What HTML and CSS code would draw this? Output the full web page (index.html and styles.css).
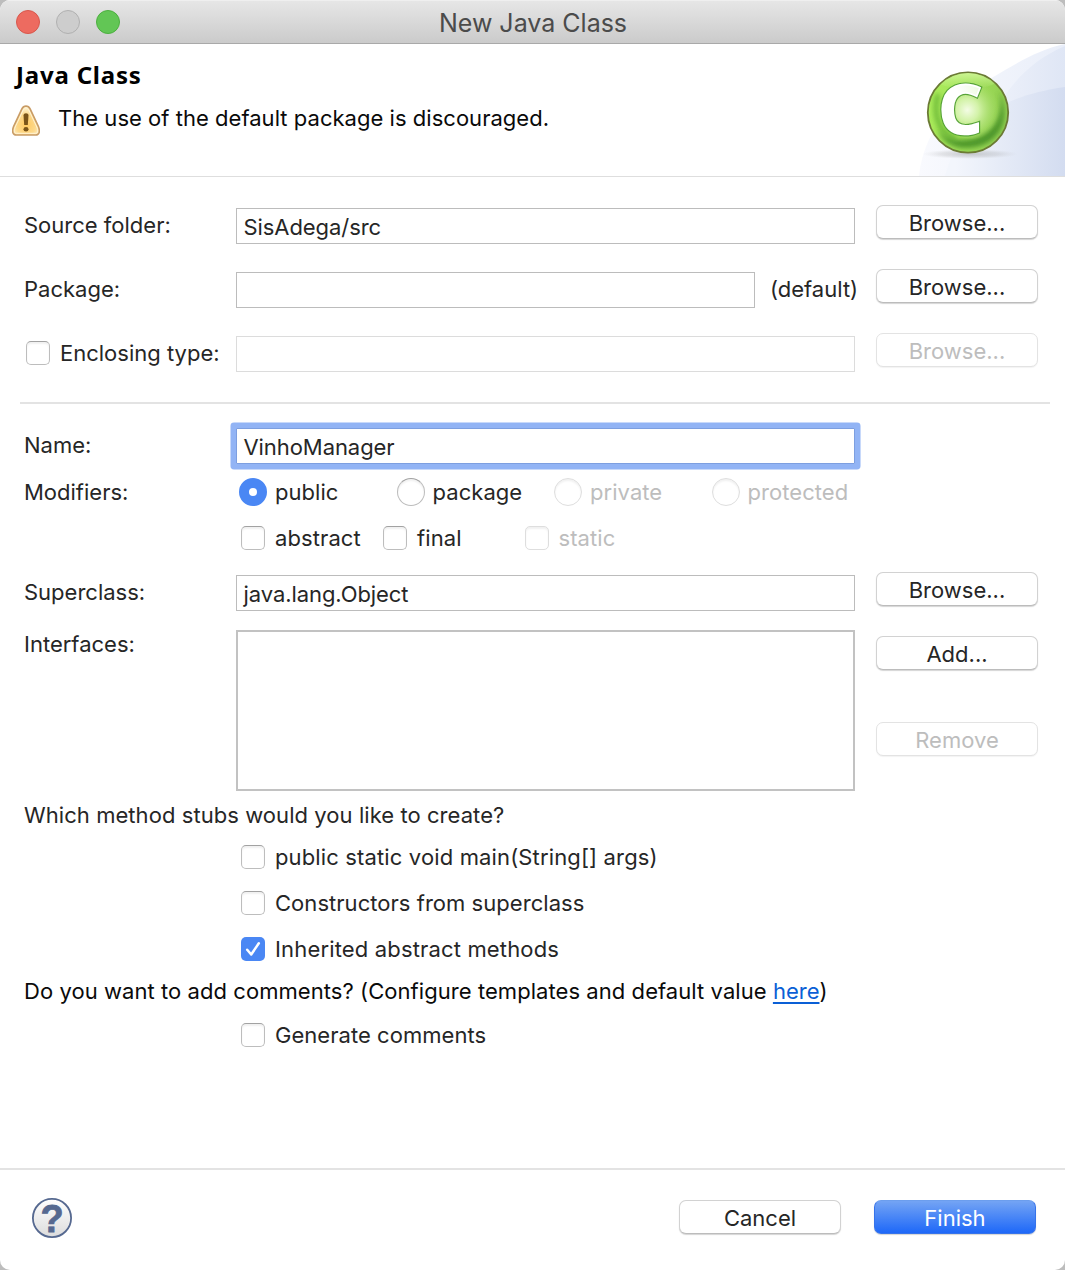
FILE: index.html
```html
<!DOCTYPE html>
<html lang="en">
<head>
<meta charset="utf-8">
<title>New Java Class</title>
<link rel="stylesheet" href="styles.css">
</head>
<body>
<div class="window">
  <header class="titlebar">
    <div class="lights"><span class="light red"></span><span class="light grey"></span><span class="light green"></span></div>
    <div class="title">New Java Class</div>
  </header>

  <section class="banner">
    <div class="banner-text">
      <h1>Java Class</h1>
      <div class="message">
        <svg class="warn" width="28" height="31" viewBox="0 0 28 31">
          <defs><radialGradient id="wg" cx=".5" cy=".65" r=".6"><stop offset="0" stop-color="#ffc95f"/><stop offset=".6" stop-color="#fdd98c"/><stop offset="1" stop-color="#fff3cf"/></radialGradient></defs>
          <path d="M14 1.200c1.900 0 3.200 1 4.100 2.700l8.300 17.600c.9 2.200 1.200 4 .7 6-.5 1.700-1.700 2.500-3.400 2.500H4.300c-1.700 0-2.900-.8-3.400-2.500-.5-2-.2-3.800.7-6L9.900 3.900C10.800 2.200 12.100 1.200 14 1.200z" fill="url(#wg)" stroke="#c99c66" stroke-width="1.700"/>
          <path d="M14 2.900c1.200 0 2 .7 2.600 1.800L24.800 22c.8 1.900 1 3.300.7 4.800-.3 1.100-.9 1.500-2 1.500h-19c-1.100 0-1.700-.4-2-1.500-.3-1.500-.1-2.900.7-4.800l8.200-17.300c.6-1.100 1.400-1.800 2.600-1.800z" fill="none" stroke="#fff4d6" stroke-width="1"/>
          <path d="M11.500 10.500c0-3 5-3 5 0L15.800 20h-3.600z" fill="#7a5418"/><ellipse cx="14" cy="24.200" rx="2.500" ry="2.200" fill="#7a5418"/>
        </svg>
        <span>The use of the default package is discouraged.</span>
      </div>
    </div>
    <svg class="banner-art" width="200" height="132" viewBox="0 0 200 132">
      <defs>
        <linearGradient id="a" x1="54" x2="200" y1="0" y2="0" gradientUnits="userSpaceOnUse"><stop offset="0" stop-color="#f9fafe"/><stop offset="1" stop-color="#e9eef9"/></linearGradient>
        <linearGradient id="b" x1="90" x2="200" y1="0" y2="0" gradientUnits="userSpaceOnUse"><stop offset="0" stop-color="#f5f7fd"/><stop offset="1" stop-color="#dfe6f5"/></linearGradient>
        <linearGradient id="c" x1="90" x2="200" y1="0" y2="0" gradientUnits="userSpaceOnUse"><stop offset="0" stop-color="#f3f6fc"/><stop offset="1" stop-color="#d3dcf0"/></linearGradient>
        <linearGradient id="ball" x1="0" x2="1" y1="0" y2=".15"><stop offset="0" stop-color="#aef05c"/><stop offset=".5" stop-color="#9fdf57"/><stop offset="1" stop-color="#93d052"/></linearGradient>
        <radialGradient id="glow" cx=".42" cy=".5" r=".55"><stop offset="0" stop-color="#f4fce6"/><stop offset=".35" stop-color="#d9f5b2" stop-opacity=".9"/><stop offset="1" stop-color="#a9dc6c" stop-opacity="0"/></radialGradient>
        <linearGradient id="top" x1="0" x2="0" y1="0" y2="1"><stop offset="0" stop-color="#d3f89c"/><stop offset="1" stop-color="#c9f590" stop-opacity="0"/></linearGradient>
        <linearGradient id="letter" x1="0" x2="1" y1="1" y2="0"><stop offset="0" stop-color="#fff"/><stop offset=".55" stop-color="#fff"/><stop offset="1" stop-color="#e3f8cf"/></linearGradient>
        <filter id="soft" x="-30%" y="-30%" width="160%" height="160%"><feGaussianBlur stdDeviation="2.500"/></filter>
        <radialGradient id="shade"><stop offset="0" stop-color="#888" stop-opacity=".4"/><stop offset=".6" stop-color="#999" stop-opacity=".22"/><stop offset="1" stop-color="#bbb" stop-opacity="0"/></radialGradient>
        <clipPath id="disc"><circle cx="103" cy="68.500" r="39.500"/></clipPath>
      </defs>
      <path d="M54 132C60 80 95 50 130 32 152 19 175 5 200 0v132z" fill="url(#a)"/>
      <path d="M95 132C125 85 135 30 200 2v130z" fill="url(#b)"/>
      <path d="M80 132C90 95 115 55 200 43v89z" fill="url(#c)"/>
      <ellipse cx="105" cy="110" rx="48" ry="5" fill="url(#shade)"/>
      <circle cx="103" cy="68.500" r="40.200" fill="url(#ball)" stroke="#6b7a35" stroke-width="1.800"/>
      <g clip-path="url(#disc)">
        <path d="M134 46C142 75 124 98 92 96 82 95 76 90 72 84c4 12 14 20 28 20 34 0 48-28 34-58z" fill="#458f26" opacity=".9" filter="url(#soft)"/>
        <ellipse cx="102" cy="36" rx="30" ry="9" fill="url(#top)"/>
        <circle cx="107" cy="66" r="29" fill="url(#glow)"/>
        <path d="M73 50c-5 18-1 38 18 45" fill="none" stroke="#57a62c" stroke-width="5" opacity=".7" filter="url(#soft)"/>
      </g>
      <g class="badge" transform="translate(73.300 89.800) scale(1.020 1)">
        <text stroke="#57a338" stroke-width="4">C</text>
        <text fill="url(#letter)" stroke="#fff" stroke-width="1.700">C</text>
      </g>
    </svg>
  </section>

  <main class="form">
    <div class="row"><label>Source folder:</label><div class="field">SisAdega/src</div><button>Browse...</button></div>
    <div class="row"><label>Package:</label><div class="with-note"><div class="field"></div><span>(default)</span></div><button>Browse...</button></div>
    <div class="row"><label class="opt enclosing"><i class="box"></i>Enclosing type:</label><div class="field off"></div><button class="off">Browse...</button></div>
    <hr>
    <div class="row name"><label>Name:</label><div class="field focus">VinhoManager</div></div>
    <div class="row mods"><label>Modifiers:</label>
      <div class="radios">
        <span class="opt"><i class="radio on"></i>public</span><span class="opt"><i class="radio"></i>package</span><span class="opt off"><i class="radio"></i>private</span><span class="opt off"><i class="radio"></i>protected</span>
      </div></div>
    <div class="flags">
      <span class="opt"><i class="box"></i>abstract</span><span class="opt"><i class="box"></i>final</span><span class="opt off"><i class="box"></i>static</span>
    </div>
    <div class="row super"><label>Superclass:</label><div class="field">java.lang.Object</div><button>Browse...</button></div>
    <div class="row ifaces"><label>Interfaces:</label><div class="list"></div><div class="stack"><button>Add...</button><button class="off">Remove</button></div></div>
    <p class="stubs">Which method stubs would you like to create?</p>
    <div class="options">
      <span class="opt signature"><i class="box"></i>public static void main(String[] args)</span>
      <span class="opt"><i class="box"></i>Constructors from superclass</span>
      <span class="opt inherited"><i class="box on"><svg width="24" height="24" viewBox="0 0 24 24"><path d="M6.200 12.800l4 4.700L17.800 6.300" fill="none" stroke="#fff" stroke-width="2.500" stroke-linecap="round" stroke-linejoin="round"/></svg></i>Inherited abstract methods</span>
    </div>
    <p class="comments">Do you want to add comments? (Configure templates and default value <a>here</a>)</p>
    <div class="options gen"><span class="opt"><i class="box"></i>Generate comments</span></div>
  </main>

  <footer class="footer">
    <svg width="42" height="42" viewBox="0 0 42 42">
      <defs><linearGradient id="hg" x1="0" x2="0" y1="0" y2="1"><stop offset="0" stop-color="#fff"/><stop offset="1" stop-color="#dcdcdc"/></linearGradient></defs>
      <circle cx="21" cy="21" r="19.100" fill="url(#hg)" stroke="#566990" stroke-width="1.800"/>
      <text class="q" x="21" y="34.500" text-anchor="middle">?</text>
    </svg>
    <div class="actions"><button>Cancel</button><button class="primary">Finish</button></div>
  </footer>
</div>
</body>
</html>
```
FILE: styles.css
```css
* { box-sizing: border-box; }
body { margin: 0; background: #bdbdbd; font-family: Inter, "Liberation Sans", sans-serif; font-size: 22px; line-height: 30px; color: #262626; }
.window { width: 1065px; height: 1270px; background: #fff; border-radius: 10px; overflow: hidden; display: flex; flex-direction: column; }

.titlebar { height: 44px; flex: none; display: grid; grid-template-columns: 120px 1fr 120px; align-items: center; padding: 0 0 0 16px; background: linear-gradient(#e6e6e6, #cbcbcb); border-top: 1px solid #efefef; border-bottom: 1px solid #a9a9a9; }
.lights { display: flex; gap: 16px; }
.light { width: 24px; height: 24px; border-radius: 50%; border: 1px solid; }
.red { background: #ed6b60; border-color: #d8574c; }
.grey { background: #cdcdcd; border-color: #b0b0b0; }
.green { background: #62c655; border-color: #4caf3f; }
.title { text-align: center; font-size: 25px; color: #4b4b4b; padding: 1px 15px 0 0; }

.banner { height: 133px; flex: none; display: flex; justify-content: space-between; border-bottom: 1px solid #dedede; color: #0a0a0a; }
.banner-text { padding: 16px 0 0 12px; }
h1 { margin: 0 0 0 4px; font: bold 24px/30px "Noto Sans", sans-serif; letter-spacing: .8px; color: #000; }
.message { display: flex; align-items: flex-start; gap: 18px; margin-top: 13px; }
.message span { letter-spacing: .03px; }
.warn { margin-top: 2px; }
.banner-art { display: block; }
.badge { font: bold 68px "Open Sans", sans-serif; }

.form { flex: 1; padding: 31px 27px 0 24px; }
.row { display: grid; grid-template-columns: 212px 619px 161px; height: 36px; margin-bottom: 28px; align-items: center; }
.row > label { margin-top: -2px; }
.row > button, .stack { margin-left: 21px; }
.field { height: 36px; border: 1px solid #bcbcbc; background: #fff; padding: 3px 0 0 6.500px; line-height: 30px; white-space: nowrap; letter-spacing: -.07px; }
.field.off { border-color: #dcdcdc; }
.with-note { display: flex; align-items: center; gap: 15px; }
.with-note .field { width: 519px; flex: none; }
.with-note span { margin-top: -2px; white-space: nowrap; }
.focus { border: 1px solid #7d9fe0; box-shadow: 0 0 0 5.500px #92b4f5; border-radius: 1px; }

button { width: 162px; height: 34px; padding: 2px 0 0; font: inherit; line-height: 28px; color: #262626; background: #fff; border: 1px solid #d2d2d2; border-bottom-color: #bcbcbc; border-radius: 7px; box-shadow: 0 1px 1px #0000002b; }
.row > button { align-self: start; margin-top: -3px; }
button.off { color: #bdbdbd; border-color: #e3e3e3; box-shadow: 0 1px 1px #0000000d; }
.primary { color: #fff; border: 1px solid #3673ea; border-top-color: #6c9eee; background: linear-gradient(#74a4f4, #1e68f8); }

.opt { display: flex; align-items: center; white-space: nowrap; }
.opt.off { color: #bdbdbd; }
.opt.off i { border-color: #dedede; }
.box { width: 24px; height: 24px; flex: none; margin-right: 10px; border: 1px solid #bdbdbd; border-top-color: #a2a2a2; border-radius: 5px; background: #fff; box-shadow: inset 0 2px 2px #0000000f; }
.box.on { border: 0; background: #4a87f4; box-shadow: none; }
.box svg { display: block; }
.radio { width: 28px; height: 28px; flex: none; margin-right: 8px; border: 1px solid #bdbdbd; border-top-color: #a2a2a2; border-radius: 50%; background: #fff; box-shadow: inset 0 2px 2px #0000000f; }
.radio.on { border: 10px solid #4a87f4; box-shadow: none; }
.enclosing { padding-left: 2px; }
hr { width: 1030px; height: 2px; margin: 30px 0 24px -4px; border: 0; background: #e3e3e3; }

.row.name { margin-bottom: 10px; }
.row.mods { margin-bottom: 13px; }
.row.mods > label { margin-top: 0; }
.radios { display: grid; grid-template-columns: repeat(4, 157.500px); padding-left: 3px; }
.radios .opt { letter-spacing: .05px; }
.flags { display: grid; grid-template-columns: 142px 141.500px 1fr; padding-left: 217px; height: 30px; margin-bottom: 22px; letter-spacing: .1px; }
.row.super { margin-bottom: 19px; }
.row.ifaces { height: 162px; align-items: start; margin-bottom: 10px; }
.row.ifaces > label { margin-top: -1px; }
.list { height: 161px; border: 2px solid #c2c2c2; }
.stack { display: flex; flex-direction: column; gap: 52px; padding-top: 6px; }
p { margin: 0; white-space: nowrap; }
.stubs { margin-top: -2px; letter-spacing: .06px; }
.options { padding: 12px 0 0 217px; display: grid; row-gap: 16px; letter-spacing: .04px; }
.signature { letter-spacing: .14px; }
.inherited { letter-spacing: .16px; }
.comments { color: #0a0a0a; margin-top: 12px; letter-spacing: .06px; }
.options.gen { padding-top: 14px; }
a { color: #0a5fd6; text-decoration: underline; text-decoration-thickness: 2px; text-underline-offset: 3px; }

.footer { height: 102px; flex: none; border-top: 2px solid #e3e3e3; display: flex; justify-content: space-between; align-items: flex-start; padding: 27px 29px 0 31px; }
.q { font: bold 38px "Liberation Sans", sans-serif; fill: #566990; stroke: #566990; stroke-width: .8px; }
.actions { display: flex; gap: 33px; padding-top: 3px; }
```
